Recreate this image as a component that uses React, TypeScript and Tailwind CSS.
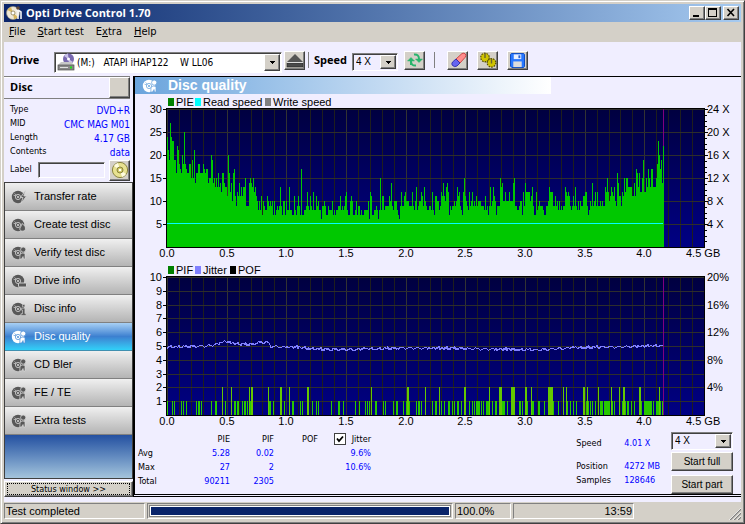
import { useState } from "react";
import type { ReactNode } from "react";

const raised =
  "border border-t-white border-l-white border-r-[#404040] border-b-[#404040] bg-[#d4d0c8] shadow-[inset_-1px_-1px_0_#808080]";
const sunken =
  "border border-t-[#808080] border-l-[#808080] border-r-white border-b-white shadow-[inset_1px_1px_0_#404040]";
const statusCell = "h-4 border border-t-[#808080] border-l-[#808080] border-r-white border-b-white";
const tahoma = "font-['DejaVu_Sans_Condensed','DejaVu_Sans',sans-serif]";
const arial = "font-['Liberation_Sans',Arial,sans-serif]";
const bold = "font-['Open_Sans',sans-serif] font-bold";

// PIE count per sample column
const pie = [
  24,21,19,27,24,23,23,19,19,16,22,21,18,17,16,20,18,25,18,17,16,16,18,18,15,19,15,21,14,16,16,18,18,16,16,16,18,17,16,17,
  17,14,15,15,20,19,14,15,13,15,13,16,13,14,12,16,16,14,13,13,11,20,16,12,14,10,16,17,11,9,12,11,14,11,13,11,13,13,15,9,
  9,9,14,15,14,13,15,12,13,11,10,8,10,8,11,7,10,9,8,8,11,10,9,10,9,10,7,10,7,8,9,8,9,13,9,7,10,10,7,10,
  8,8,13,8,8,7,7,11,8,7,9,11,9,7,17,7,7,8,8,9,12,9,8,11,9,8,12,8,8,11,9,10,8,8,6,9,9,10,9,7,
  7,9,8,8,8,10,7,8,7,8,8,9,9,11,8,9,8,9,11,12,8,7,7,10,11,10,7,7,8,10,7,9,9,7,8,7,7,8,8,8,
  8,10,6,12,11,7,7,8,8,9,8,6,8,15,8,11,11,8,9,9,9,9,11,10,14,9,8,10,10,10,8,7,6,9,12,9,9,11,12,10,
  10,10,9,9,9,12,9,8,10,13,8,9,10,10,12,11,9,13,10,9,8,8,9,9,8,12,8,7,11,11,10,10,8,9,12,11,14,11,10,13,
  14,12,7,9,8,9,9,10,9,10,13,11,12,9,8,7,12,15,11,10,9,8,12,9,10,12,9,10,9,11,9,10,10,10,9,9,9,8,11,8,
  9,7,9,13,9,10,13,11,10,7,9,9,9,15,13,14,10,10,12,10,10,10,12,10,10,10,14,15,9,9,8,8,9,10,10,7,12,9,14,12,
  12,12,12,10,11,13,9,7,7,12,8,9,10,9,9,9,8,7,7,9,9,10,13,12,12,12,9,9,11,9,10,8,10,8,9,8,9,9,13,12,
  11,12,11,9,8,9,11,9,13,9,8,10,8,10,9,9,11,11,12,12,9,7,8,10,9,14,9,10,12,9,12,9,9,10,9,10,9,9,13,12,
  15,12,10,11,13,12,11,13,10,9,16,14,11,11,9,12,11,15,12,15,15,13,13,13,13,11,11,14,11,17,16,13,16,12,12,15,19,12,12,15,
  13,17,15,13,17,17,13,13,13,15,18,23,20,17,19,14,22,
];

// columns where one or two PIF were counted
const pif1 = [
  0,5,7,14,16,19,29,31,32,34,44,48,49,58,67,68,70,71,75,77,78,80,83,102,103,106,117,125,126,133,135,145,149,151,164,171,
  172,176,188,192,198,200,202,208,209,216,218,226,229,230,236,239,242,249,251,252,254,265,268,269,274,277,281,282,285,287,
  290,291,294,302,305,307,309,310,311,312,314,316,319,320,321,325,328,329,334,335,336,337,340,352,353,355,360,365,366,371,
  372,377,386,391,400,403,406,409,419,421,423,425,428,433,434,435,437,438,439,440,441,442,445,447,455,458,460,461,464,467,
  474,477,478,479,480,481,482,483,484,486,489,490,491,493,495,
];
const pif2 = [
  55,64,82,84,85,101,113,114,122,140,141,204,240,241,258,272,297,298,322,332,333,334,344,345,346,347,358,359,364,381,382,
  383,384,385,396,399,416,417,420,431,444,452,456,457,472,473,492,
];

// [column, level] knots of the jitter curve
const jitterKnots = [
  [0, 4.9], [40, 5], [52, 5.15], [57, 5.3], [75, 5.1], [86, 5.1], [92, 5.25], [101, 5.25], [104, 4.95], [130, 4.9],
  [150, 4.75], [190, 4.75], [240, 4.85], [300, 4.8], [370, 4.7], [400, 4.85], [496, 5],
];

function jitterPoints() {
  const wobble = [0, 1, 0, -1, 0, 1, 1, -1, 0, 2, 0, -1, 1, 0, 1, -1, -1, 0, 1];
  const points: string[] = [];
  for (let x = 0; x <= 496; x++) {
    const i = Math.max(1, jitterKnots.findIndex((k) => k[0] >= x));
    const [x0, y0] = jitterKnots[i - 1];
    const [x1, y1] = jitterKnots[i];
    const level = y0 + ((y1 - y0) * (x - x0)) / (x1 - x0);
    const w = wobble[(x * 7 + Math.floor(x / 11)) % wobble.length];
    points.push(`${LEFT + x},${(BOTTOM - level * 13.8 - w).toFixed(1)}`);
  }
  return points.join(" ");
}

const LEFT = 32;
const RIGHT = 569;
const TOP = 15;
const BOTTOM = 153;

type Legend = { x: number; color: string; label: string };

function Chart({
  id, title, legend, yMax, yStep, right, minorTicks, children,
}: {
  id: string; title: string; legend: Legend[]; yMax: number; yStep: number;
  right: [number, string][]; minorTicks?: boolean; children: ReactNode;
}) {
  const rows: number[] = [];
  for (let v = yStep; v <= yMax; v += yStep) rows.push(v);
  const cols = Array.from({ length: 46 }, (_, i) => i);
  const yOf = (v: number) => Math.round(BOTTOM - (v / yMax) * (BOTTOM - TOP));
  const xOf = (i: number) => Math.round(LEFT + (i * (RIGHT - LEFT)) / 45);

  return (
    <svg viewBox="0 0 606 168" className={`block w-full h-auto text-[11px] ${arial}`} role="img" aria-label={title}>
      <defs>
        <linearGradient id={id} x1="0" y1="0" x2="0" y2="1">
          <stop offset="0" stopColor="#000040" />
          <stop offset="1" stopColor="#000084" />
        </linearGradient>
      </defs>
      {legend.map((l) => (
        <g key={l.label}>
          <rect x={l.x} y="4" width="6" height="8" fill={l.color} />
          <text x={l.x + 8} y="12">{l.label}</text>
        </g>
      ))}
      <g shapeRendering="crispEdges">
        <rect x={LEFT} y={TOP} width={RIGHT - LEFT} height={BOTTOM - TOP} fill={`url(#${id})`} />
        {cols.map((i) => (
          <rect key={i} x={xOf(i)} y={TOP} width="1" height={BOTTOM - TOP} fill={i % 5 ? "#1e1e1e" : "#323232"} />
        ))}
        {rows.map((v) => (
          <g key={v}>
            <rect x={LEFT} y={yOf(v)} width={RIGHT - LEFT} height="1" fill="#2d2d2d" />
            <rect x={LEFT - 4} y={yOf(v)} width="4" height="1" fill="#000" />
          </g>
        ))}
        <rect x={LEFT - 1} y={TOP - 1} width={RIGHT - LEFT + 2} height="1" />
        <rect x={LEFT - 1} y={BOTTOM} width={RIGHT - LEFT + 2} height="1" />
        <rect x={LEFT - 1} y={TOP - 1} width="1" height={BOTTOM - TOP + 2} />
        <rect x={RIGHT} y={TOP - 1} width="1" height={BOTTOM - TOP + 2} />
        <rect x={LEFT + 496} y={TOP} width="1" height={BOTTOM - TOP} fill="#800080" />
        {children}
        {minorTicks &&
          Array.from({ length: 24 }, (_, i) => (
            <rect key={i} x={RIGHT} y={Math.round(TOP + i * 5.75)} width={i % 4 ? 3 : 4} height="1" />
          ))}
      </g>
      {rows.map((v) => (
        <text key={v} x="27" y={yOf(v) + 4} textAnchor="end">{v}</text>
      ))}
      {right.map(([v, label]) => (
        <text key={label} x="572" y={yOf(v) + 4}>{label}</text>
      ))}
      {cols.filter((i) => i % 5 === 0 && i < 45).map((i) => (
        <text key={i} x={xOf(i)} y="163" textAnchor="middle">{(i / 10).toFixed(1)}</text>
      ))}
      <text x="551" y="163">4.5 GB</text>
    </svg>
  );
}

function DiscIcon({ color, hole, kind }: { color: string; hole: string; kind: string }) {
  return (
    <svg viewBox="0 0 16 16" className="size-4 shrink-0" aria-hidden="true">
      <circle cx="7" cy="8" r="6.2" fill={color} />
      <circle cx="7" cy="8" r="2.6" fill="none" stroke={hole} strokeWidth="0.8" />
      <circle cx="7" cy="8" r="1" fill={hole} />
      <path d="M2.5 6.2 L5 7 M3.5 4.5 L5.4 6.2" stroke={hole} strokeWidth="0.7" />
      {kind === "bolt" && <path d="M14.5 1.5 L9.5 8.5 H12 L10 14.5 L15.5 7 H12.8 Z" fill={color} stroke={hole} strokeWidth="0.8" />}
      {kind === "flame" && <path d="M11 6.5 C14 8.5 15 10.5 14.3 12.5 C13.5 14.6 9.5 14.8 8.8 12.3 C8.4 10.5 10.8 9.5 11 6.5 Z" fill={color} stroke={hole} strokeWidth="0.8" />}
      {kind === "check" && (
        <>
          <circle cx="12.2" cy="4.6" r="2.6" fill={color} stroke={hole} strokeWidth="0.8" />
          <path d="M9 9.5 L11 8 L14 8.5 L14 14 L12.5 14 L12 11.5 L10.5 14 H8.8 Z" fill={color} stroke={hole} strokeWidth="0.7" />
        </>
      )}
      {kind === "drive" && <rect x="7.5" y="10" width="8" height="4" rx="1" fill={color} stroke={hole} strokeWidth="0.9" />}
      {kind === "info" && <path d="M11.5 3.5 h2.4 v2.4 h-2.4 z M10.3 7.2 h3.6 v5.4 h1.2 v1.8 h-5 v-1.8 h1.4 v-3.6 h-1.2 z" fill={color} stroke={hole} strokeWidth="0.6" />}
    </svg>
  );
}

function GoldDisc() {
  return (
    <svg viewBox="0 0 18 18" className="size-[18px]" aria-hidden="true">
      <circle cx="9" cy="9" r="7.6" fill="#e8e290" stroke="#8a8440" />
      <path d="M9 9 L3 5 A7 7 0 0 1 7 2 Z M9 9 L15 13 A7 7 0 0 1 11 16 Z" fill="#fffce0" />
      <circle cx="9" cy="9" r="3" fill="#d0c860" stroke="#8a8440" />
      <circle cx="9" cy="9" r="1.3" fill="#fff" />
    </svg>
  );
}

function SpeedSelect({ id, label, className }: { id: string; label: string; className: string }) {
  return (
    <div className={`relative flex ${sunken} ${className}`}>
      <select id={id} aria-label={label} className={`w-full appearance-none bg-transparent pl-[3px] text-[10px] leading-none ${arial}`}>
        <option>4 X</option>
        <option>8 X</option>
      </select>
      <Arrow />
    </div>
  );
}

function Arrow() {
  return (
    <span className={`pointer-events-none absolute top-px right-px bottom-px flex w-4 items-center justify-center ${raised}`}>
      <svg viewBox="0 0 5 3" className="h-[3px] w-[5px]" shapeRendering="crispEdges" aria-hidden="true">
        <path d="M0 0h5v1H0z M1 1h3v1H1z M2 2h1v1H2z" />
      </svg>
    </span>
  );
}

function ToolButton({ label, children }: { label: string; children: ReactNode }) {
  return (
    <button aria-label={label} className={`flex h-[19px] w-[21px] shrink-0 items-center justify-center ${raised}`}>
      {children}
    </button>
  );
}

const nav = [
  ["Transfer rate", "bolt"],
  ["Create test disc", "flame"],
  ["Verify test disc", "check"],
  ["Drive info", "drive"],
  ["Disc info", "info"],
  ["Disc quality", "check"],
  ["CD Bler", "check"],
  ["FE / TE", "check"],
  ["Extra tests", "check"],
];

const discInfo = [
  ["Type", "DVD+R"],
  ["MID", "CMC MAG M01"],
  ["Length", "4.17 GB"],
  ["Contents", "data"],
];

function TitleBar() {
  return (
    <header className="flex h-[18px] items-center gap-1 bg-linear-to-r from-[#0a246a] to-[#a6caf0] pr-[2px] pl-[2px]">
      <svg viewBox="0 0 16 16" className="size-4" aria-hidden="true">
        <circle cx="7" cy="8" r="6.5" fill="#efe8d8" stroke="#a09880" strokeWidth="0.6" />
        <path d="M7 8 L1.5 5 A6.5 6.5 0 0 1 5 2 Z M7 8 L8 14.3 A6.5 6.5 0 0 0 12 12 Z" fill="#d8b860" />
        <circle cx="7" cy="8" r="2" fill="#fff" stroke="#807040" strokeWidth="0.7" />
        <path d="M10 6 L12 4 L12 14 M12 5 L15 7 V14" fill="none" stroke="#f4f4f4" strokeWidth="1.6" />
        <circle cx="12" cy="3" r="1.8" fill="#604838" />
      </svg>
      <h1 className={`text-[11px] text-white ${bold}`}>Opti Drive Control 1.70</h1>
      <div className="ml-auto flex">
        <button aria-label="Minimize" className={`h-[14px] w-4 ${raised}`}>
          <svg viewBox="0 0 14 12" shapeRendering="crispEdges"><path d="M3 8h6v2H3z" /></svg>
        </button>
        <button aria-label="Maximize" className={`h-[14px] w-4 ${raised}`}>
          <svg viewBox="0 0 14 12" shapeRendering="crispEdges"><path d="M2 1h9v9H2z M3 3v6h7V3z" fillRule="evenodd" /></svg>
        </button>
        <button aria-label="Close" className={`ml-[2px] h-[14px] w-4 ${raised}`}>
          <svg viewBox="0 0 14 12"><path d="M3.5 2 L10 9 M10 2 L3.5 9" stroke="#000" strokeWidth="1.6" /></svg>
        </button>
      </div>
    </header>
  );
}

function MenuBar() {
  return (
    <nav className={`flex h-5 items-center gap-3 pl-[5px] text-[11px] ${tahoma}`}>
      <button><u>F</u>ile</button>
      <button><u>S</u>tart test</button>
      <button>E<u>x</u>tra</button>
      <button><u>H</u>elp</button>
    </nav>
  );
}

function Toolbar() {
  return (
    <div className="flex h-[34px] items-center pt-[2px] pl-[6px]">
      <label htmlFor="drive" className={`w-11 text-[11px] ${bold}`}>Drive</label>
      <div className={`relative mt-1 flex h-[21px] w-[228px] items-center bg-white ${sunken}`}>
        <svg viewBox="0 0 18 18" className="ml-[2px] size-[18px] shrink-0" aria-hidden="true">
          <circle cx="11.5" cy="6" r="5.5" fill="#7868b0" />
          <path d="M11.5 6 L7 3 A5.5 5.5 0 0 1 11 .5 Z M11.5 6 L16 9 A5.5 5.5 0 0 1 12 11.5 Z" fill="#c8c0e8" />
          <circle cx="11.5" cy="6" r="1.5" fill="#fff" />
          <path d="M1 12 L4 9 H14 L17 12 Z" fill="#c8c8c8" />
          <rect x="1" y="12" width="16" height="5" fill="#888" stroke="#505050" strokeWidth="0.7" />
          <rect x="3" y="14" width="8" height="1" fill="#e0e0e0" />
          <rect x="13" y="13.5" width="2" height="2" fill="#20e020" />
        </svg>
        <select id="drive" className={`min-w-0 flex-1 appearance-none pl-[2px] text-[10px] ${tahoma}`}>
          <option>(M:)&nbsp;&nbsp; ATAPI iHAP122&nbsp;&nbsp;&nbsp; W LL06</option>
        </select>
        <Arrow />
      </div>
      <div className="ml-[2px] flex items-center">
        <ToolButton label="Eject">
          <svg viewBox="0 0 18 16" className="h-4 w-[18px]">
            <path d="M9 2 L17 10 H1 Z" fill="#555" />
            <rect x="1" y="11" width="16" height="4" fill="#4a4a4a" stroke="#222" strokeWidth="0.6" />
            <rect x="1" y="10" width="16" height="1" fill="#ddd" />
          </svg>
        </ToolButton>
        <span className="mx-[3px] h-4 w-px bg-[#808080]" />
      </div>
      <label htmlFor="speed" className={`w-[38px] pl-[2px] text-[11px] ${bold}`}>Speed</label>
      <SpeedSelect id="speed" label="Speed" className="mt-1 ml-[2px] h-[18px] w-[46px]" />
      <div className="ml-[6px] flex items-center gap-[9px]">
        <ToolButton label="Refresh">
          <svg viewBox="0 0 18 16" className="h-4 w-[18px]" fill="none" stroke="#28b46c" strokeWidth="2">
            <path d="M5 13 V8 M10 13.5 Q5 14 5 9" />
            <path d="M1.5 9 L5 5.5 L8.5 9 Z" fill="#28b46c" strokeWidth="0.5" />
            <path d="M8 2.5 Q13 2 13 7" />
            <path d="M9.5 7 L13 10.5 L16.5 7 Z" fill="#28b46c" strokeWidth="0.5" />
          </svg>
        </ToolButton>
        <span className="mr-[3px] h-4 w-px bg-[#808080]" />
        <ToolButton label="Erase">
          <svg viewBox="0 0 18 16" className="h-4 w-[18px]" strokeWidth="0.8">
            <path d="M7 7 L13 1.5 Q15 .5 16.5 2 Q17.5 3.5 16 5.5 L11 11 Z" fill="#ff8c8c" stroke="#c03030" />
            <path d="M3.5 10 L7 7 L11 11 L8 14 Q5.5 15.5 3.5 13.5 Q2 12 3.5 10 Z" fill="#6464f0" stroke="#2020a0" />
          </svg>
        </ToolButton>
        <ToolButton label="Options">
          <svg viewBox="0 0 18 16" className="h-4 w-[18px]" fill="#d0c400" stroke="#5a5200" strokeWidth="1.4">
            <circle cx="6" cy="5.5" r="4.2" strokeDasharray="1.6 1" />
            <circle cx="12.5" cy="10.8" r="4.2" strokeDasharray="1.6 1" />
            <circle cx="6" cy="5.5" r="3.4" stroke="none" />
            <circle cx="12.5" cy="10.8" r="3.4" stroke="none" />
            <path d="M6 1 V6 M12.5 6.5 V11.5" stroke="#6a6430" />
          </svg>
        </ToolButton>
        <ToolButton label="Save">
          <svg viewBox="0 0 16 16" className="size-[15px]">
            <path d="M1.5 .5 H14.5 L15.5 1.5 V14.5 L14.5 15.5 H2 L.5 14 V1.5 Z" fill="#2878ff" stroke="#0848c0" />
            <rect x="4" y="1.5" width="8" height="5" fill="#e8f0ff" />
            <rect x="9" y="2.5" width="2" height="3" fill="#2860d0" />
            <rect x="3.5" y="9" width="9" height="6" fill="#dcdcdc" />
          </svg>
        </ToolButton>
      </div>
    </div>
  );
}

function Sidebar({ active, onSelect }: { active: string; onSelect: (name: string) => void }) {
  return (
    <aside className={`flex w-[129px] shrink-0 flex-col text-[10px] ${tahoma}`}>
      <div className="mr-[3px] flex h-[23px] items-center justify-between border-y border-[#808080] pl-[6px] shadow-[inset_0_1px_0_#fff]">
        <h2 className={`text-[11px] ${bold}`}>Disc</h2>
        <button aria-label="Refresh disc" className={`h-[21px] w-[21px] ${raised}`} />
      </div>
      <dl className="mr-[3px] pt-1 pl-[6px]">
        {discInfo.map(([k, v]) => (
          <div key={k} className="flex h-[14px] items-center justify-between">
            <dt className="text-[9px]">{k}</dt>
            <dd className="text-[#0000ff]">{v}</dd>
          </div>
        ))}
      </dl>
      <div className="mr-[3px] flex h-[22px] items-center pl-[6px]">
        <label htmlFor="label" className="w-7 text-[9px]">Label</label>
        <input id="label" className={`h-4 w-[67px] bg-transparent ${sunken}`} />
        <button aria-label="Write label" className={`ml-auto flex h-[21px] w-[21px] items-center justify-center ${raised}`}>
          <GoldDisc />
        </button>
      </div>
      <div className="mt-px flex flex-1 flex-col border border-[#404040]">
        {nav.map(([name, kind]) => {
          const on = name === active;
          return (
            <button
              key={name}
              onClick={() => onSelect(name)}
              className={`flex h-7 items-center gap-[7px] border-b pl-[6px] text-[11px] ${arial} ${
                on
                  ? "border-[#4090b0] bg-linear-to-b from-[#a8d0f4] via-[#3c80d0] to-[#30d0f8] text-white"
                  : "border-[#808080] bg-linear-to-b from-[#f0f0f0] to-[#b4b4b4] text-black"
              }`}
            >
              <DiscIcon color={on ? "#ffffff" : "#585858"} hole={on ? "#5090d8" : "#d8d8d8"} kind={kind} />
              {name}
            </button>
          );
        })}
        <div className="flex-1 bg-linear-to-b from-[#2450a0] to-[#a4c4dc]" />
      </div>
      <button className={`mt-[2px] mb-[5px] h-4 p-px text-[9px] leading-none ${raised}`}>
        <span className="mx-px flex h-3 items-center justify-center border border-dotted border-black">Status window &gt;&gt;</span>
      </button>
    </aside>
  );
}

function Results() {
  const [jitter, setJitter] = useState(true);
  const num = "text-right text-[#0000ff]";
  return (
    <div className={`flex items-start justify-between pt-[2px] pl-[3px] pr-2 text-[9px] ${tahoma}`}>
      <table className="leading-[14px]">
        <thead>
          <tr>
            <td className="w-11" />
            <th className="w-12 p-0 text-right font-normal">PIE</th>
            <th className="w-11 p-0 text-right font-normal">PIF</th>
            <th className="w-11 p-0 text-right font-normal">POF</th>
            <th className="w-[53px] p-0 font-normal">
              <label className="flex items-center justify-end gap-[6px]">
                <input
                  type="checkbox"
                  checked={jitter}
                  onChange={(e) => setJitter(e.target.checked)}
                  className="absolute size-3 opacity-0"
                />
                <span className="flex size-3 items-center justify-center border border-[#404040] bg-white">
                  {jitter && <svg viewBox="0 0 8 8" className="size-2"><path d="M1 3.5 L3 6 L7 1.5" fill="none" stroke="#000" strokeWidth="1.8" /></svg>}
                </span>
                Jitter
              </label>
            </th>
          </tr>
        </thead>
        <tbody>
          <tr><td>Avg</td><td className={num}>5.28</td><td className={num}>0.02</td><td /><td className={num}>9.6%</td></tr>
          <tr><td>Max</td><td className={num}>27</td><td className={num}>2</td><td /><td className={num}>10.6%</td></tr>
          <tr><td>Total</td><td className={num}>90211</td><td className={num}>2305</td><td /><td /></tr>
        </tbody>
      </table>
      <div className="flex gap-[11px]">
        <dl className="grid grid-cols-[48px_auto] content-start pt-1 leading-[14px]">
          <dt className="pb-[9px]">Speed</dt><dd className="text-[#0000ff]">4.01 X</dd>
          <dt>Position</dt><dd className="text-[#0000ff]">4272 MB</dd>
          <dt>Samples</dt><dd className="text-[#0000ff]">128646</dd>
        </dl>
        <div className={`flex flex-col text-[10px] ${arial}`}>
          <SpeedSelect id="test-speed" label="Test speed" className="h-[18px] w-[62px]" />
          <button className={`mt-[2px] h-[19px] w-[62px] leading-none ${raised}`}>Start full</button>
          <button className={`mt-1 h-[19px] w-[62px] leading-none ${raised}`}>Start part</button>
        </div>
      </div>
    </div>
  );
}

function StatusBar() {
  return (
    <footer className={`flex h-[18px] items-center gap-[2px] text-[11px] leading-[14px] ${arial}`}>
      <div className={`w-[141px] pl-px ${statusCell}`}>Test completed</div>
      <div className={`min-w-0 flex-1 p-px ${statusCell}`}>
        <div role="progressbar" aria-label="Progress" aria-valuenow={100} className="h-3 border border-[#808080] bg-white p-px">
          <div className="h-full bg-[#0a246a]" style={{ width: "100%" }} />
        </div>
      </div>
      <div className={`w-14 pl-px ${statusCell}`}>100.0%</div>
      <div className={`w-[121px] pr-px text-right ${statusCell}`}>13:59</div>
      <div className="flex w-[105px] justify-end self-end">
        <svg viewBox="0 0 12 12" className="size-3" aria-hidden="true">
          <path d="M1 12 L12 1 M5 12 L12 5 M9 12 L12 9" stroke="#808080" strokeWidth="1.4" />
          <path d="M0 12 L12 0 M4 12 L12 4 M8 12 L12 8" stroke="#fff" strokeWidth="0.7" />
        </svg>
      </div>
    </footer>
  );
}

export default function App() {
  const [active, setActive] = useState("Disc quality");

  return (
    <div className="flex min-h-screen flex-col border border-[#d4d0c8] border-r-[#404040] border-b-[#404040] bg-[#d4d0c8] p-[3px] text-black shadow-[inset_1px_1px_0_#fff,inset_-1px_-1px_0_#808080]">
      <TitleBar />
      <MenuBar />
      <div className="flex flex-1 flex-col bg-[#f0eeff]">
        <Toolbar />
        <div className="flex flex-1">
          <Sidebar active={active} onSelect={setActive} />
          <div className="min-w-0 flex-1 pb-[5px]">
            <main className="h-full border-t border-b-[3px] border-l-2 border-black [border-bottom-style:double]">
              <div className="flex h-[17px] w-[416px] items-center gap-[10px] bg-linear-to-r from-[#6aa4dc] to-white pl-[7px]">
                <DiscIcon color="#ffffff" hole="#6aa4dc" kind="check" />
                <h2 className={`text-[14px] font-bold text-white ${arial}`}>{active}</h2>
              </div>
              <Chart
                id="bg-pie"
                title="PIE and speed"
                yMax={30}
                yStep={5}
                minorTicks
                right={[[30, "24 X"], [25, "20 X"], [20, "16 X"], [15, "12 X"], [10, "8 X"], [5, "4 X"]]}
                legend={[
                  { x: 33, color: "#008000", label: "PIE" },
                  { x: 60, color: "#00ffff", label: "Read speed" },
                  { x: 130, color: "#808080", label: "Write speed" },
                ]}
              >
                {pie.map((v, i) => (
                  <rect key={i} x={LEFT + i} y={Math.round(BOTTOM - v * 4.6)} width="1" height={Math.round(v * 4.6)} fill="#00c800" />
                ))}
                <rect x={LEFT} y="129" width="496" height="1" fill="#00ffff" />
              </Chart>
              <Chart
                id="bg-pif"
                title="PIF and jitter"
                yMax={10}
                yStep={1}
                right={[[10, "20%"], [8, "16%"], [6, "12%"], [4, "8%"], [2, "4%"]]}
                legend={[
                  { x: 33, color: "#008000", label: "PIF" },
                  { x: 60, color: "#8080ff", label: "Jitter" },
                  { x: 95, color: "#000000", label: "POF" },
                ]}
              >
                {pif1.map((i) => (
                  <rect key={i} x={LEFT + i} y="139" width="1" height="14" fill="#28c800" />
                ))}
                {pif2.map((i) => (
                  <rect key={i} x={LEFT + i} y="125" width="1" height="28" fill="#64c800" />
                ))}
                <polyline points={jitterPoints()} fill="none" stroke="#8080ff" strokeWidth="1" />
              </Chart>
              <Results />
            </main>
          </div>
        </div>
      </div>
      <StatusBar />
    </div>
  );
}
